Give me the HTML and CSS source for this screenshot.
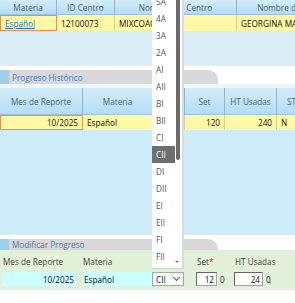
FILE: index.html
```html
<!DOCTYPE html>
<html lang="es">
<head>
<meta charset="utf-8">
<title>Progreso</title>
<link rel="stylesheet" href="styles.css">
</head>
<body>
<div class="page">

<div class="grid grid-top">
  <div class="row head">
    <div class="cell">Materia</div>
    <div class="cell">ID Centro</div>
    <div class="cell">Nombre del Centro</div>
    <div class="cell">Nombre del Director</div>
  </div>
  <div class="row data">
    <div class="cell cur"><a href="#">Español</a></div>
    <div class="cell">12100073</div>
    <div class="cell">MIXCOAC</div>
    <div class="cell">GEORGINA MARTINEZ</div>
  </div>
</div>
<div class="fill fill-top"></div>

<div class="sec-head">
  <div class="tab"><span class="mark"></span>Progreso Histórico</div>
</div>
<div class="sec-gap"></div>

<div class="grid grid-hist">
  <div class="row head">
    <div class="cell">Mes de Reporte</div>
    <div class="cell">Materia</div>
    <div class="cell">Nivel</div>
    <div class="cell">Set</div>
    <div class="cell">HT Usadas</div>
    <div class="cell">ST Usadas</div>
  </div>
  <div class="row data">
    <div class="cell cur num">10/2025</div>
    <div class="cell">Español</div>
    <div class="cell">CII</div>
    <div class="cell num">120</div>
    <div class="cell num">240</div>
    <div class="cell">N</div>
  </div>
</div>
<div class="fill fill-mid"></div>

<div class="sec-head sec-edit">
  <div class="tab"><span class="mark"></span>Modificar Progreso</div>
</div>

<div class="form">
  <div class="field f-mes">
    <label>Mes de Reporte</label>
    <div class="box ro num">10/2025</div>
  </div>
  <div class="field f-mat">
    <label>Materia</label>
    <div class="pair">
      <div class="box ro">Español</div>
      <div class="select">CII<span class="chev"></span></div>
    </div>
  </div>
  <div class="field f-set">
    <label>Set<span class="req">*</span></label>
    <div class="pair"><div class="box edit num">12</div><span class="zero">0</span></div>
  </div>
  <div class="field f-ht">
    <label>HT Usadas</label>
    <div class="pair"><div class="box edit num">24</div><span class="zero">0</span></div>
  </div>
</div>

<div class="dropdown">
  <div class="opt">6A</div>
  <div class="opt">5A</div>
  <div class="opt">4A</div>
  <div class="opt">3A</div>
  <div class="opt">2A</div>
  <div class="opt">AI</div>
  <div class="opt">AII</div>
  <div class="opt">BI</div>
  <div class="opt">BII</div>
  <div class="opt">CI</div>
  <div class="opt on">CII</div>
  <div class="opt">DI</div>
  <div class="opt">DII</div>
  <div class="opt">EI</div>
  <div class="opt">EII</div>
  <div class="opt">FI</div>
  <div class="opt">FII</div>
  <div class="thumb"></div>
  <div class="down"></div>
</div>

</div>
</body>
</html>
```

FILE: styles.css
```css
/* Progreso del alumno - vista de captura */

body
{ margin: 0;
background-color: white;
font-family: "Open Sans", "Noto Sans", sans-serif;
font-size: 8.2px;
color: #333;
}

div.page
{ position: relative;
width: 295px;
height: 303px;
overflow: hidden;
}

/* Grids */

div.grid
{ overflow: hidden;
width: 295px;
}

div.row
{ display: grid;
}

div.grid-top div.row
{ grid-template-columns: 57px 58px 122px 120px;
}

div.grid-hist div.row
{ grid-template-columns: 83px 70px 32px 40px 52px 60px;
}

div.cell
{ box-sizing: border-box;
white-space: nowrap;
overflow: hidden;
padding: 0 4px;
display: flex;
align-items: center;
}

div.head div.cell
{ justify-content: center;
color: #4a5f70;
background: linear-gradient(#d3ecfa, #b3dcf4);
border-right: 1px solid #90b5cf;
border-bottom: 1px solid #9cc2dc;
}

div.data div.cell
{ background-color: #fff9a6;
color: #111;
border-right: 1px solid #d6cf9a;
}

div.data div.num
{ justify-content: flex-end;
}

div.data div.cur
{ border: 1px solid #ef8a55;
}

div.grid-top div.head { height: 15px; }
div.grid-top div.data { height: 16px; }
div.grid-hist div.head { height: 27px; }
div.grid-hist div.data { height: 15px; }

div.data a
{ color: #1e74c4;
}

/* Fills */

div.fill-top
{ height: 35px;
background-color: #dbedf6;
}

div.fill-mid
{ height: 105px;
background-color: #cdedf9;
}

/* Section headers */

div.sec-head
{ padding-top: 4px;
background-color: white;
}

div.tab
{ width: 218px;
height: 14px;
box-sizing: border-box;
background-color: #d8d8d8;
border-top-right-radius: 10px;
color: #3b7cc2;
display: flex;
align-items: center;
}

span.mark
{ width: 9px;
height: 100%;
margin-right: 3px;
background-color: #9fcdea;
}

div.sec-gap
{ height: 4px;
background-color: #edf6fb;
}

div.sec-edit div.tab
{ height: 11px;
}

/* Form */

div.form
{ display: flex;
height: 40px;
box-sizing: border-box;
padding: 6px 0 0 2px;
background-color: #e2efd9;
}

div.field
{ display: flex;
flex-direction: column;
}

div.field label
{ height: 12px;
line-height: 12px;
margin: 0 0 4px 1px;
color: #444;
}

span.req { color: #e02020; }

div.pair
{ display: flex;
align-items: center;
}

div.box
{ box-sizing: border-box;
height: 14px;
padding: 0 2px;
display: flex;
align-items: center;
color: #111;
}

div.box.num { justify-content: flex-end; }

div.ro { background-color: #ccffff; }

div.edit
{ background-color: white;
border: 1px solid #a0a0a0;
border-top-color: #666;
border-left-color: #666;
}

div.f-mes { width: 80px; }
div.f-mes div.box { width: 74px; }
div.f-mat { width: 114px; }
div.f-mat div.ro { width: 70px; }
div.f-set { width: 38px; }
div.f-set div.box { width: 21px; }
div.f-ht div.box { width: 29px; }

span.zero
{ margin-left: 3px;
color: #222;
}

div.select
{ box-sizing: border-box;
width: 32px;
height: 14px;
padding-left: 3px;
border: 1px solid #a6a6a6;
background-color: #fbfdfb;
color: #222;
display: flex;
align-items: center;
position: relative;
}

span.chev
{ position: absolute;
right: 4px;
top: 2px;
width: 4px;
height: 4px;
border-right: 1px solid #555;
border-bottom: 1px solid #555;
transform: rotate(45deg);
}

/* Open list of the select */

div.dropdown
{ position: absolute;
left: 152px;
top: -24px;
width: 32px;
padding-bottom: 3px;
box-sizing: border-box;
background-color: white;
border-right: 2px solid #dcdcdc;
border-bottom: 1px solid #d0d0d0;
}

div.opt
{ height: 17px;
line-height: 17px;
width: 23px;
padding-left: 4px;
box-sizing: border-box;
color: #555;
}

div.opt.on
{ background-color: #6e6e6e;
color: white;
}

div.thumb
{ position: absolute;
right: 2px;
top: 0;
width: 4px;
height: 184px;
background-color: #6b6b6b;
border-radius: 0 0 2px 2px;
}

div.down
{ position: absolute;
right: 3px;
bottom: 5px;
width: 0;
height: 0;
border-left: 2px solid transparent;
border-right: 2px solid transparent;
border-top: 2px solid #777;
}
```
